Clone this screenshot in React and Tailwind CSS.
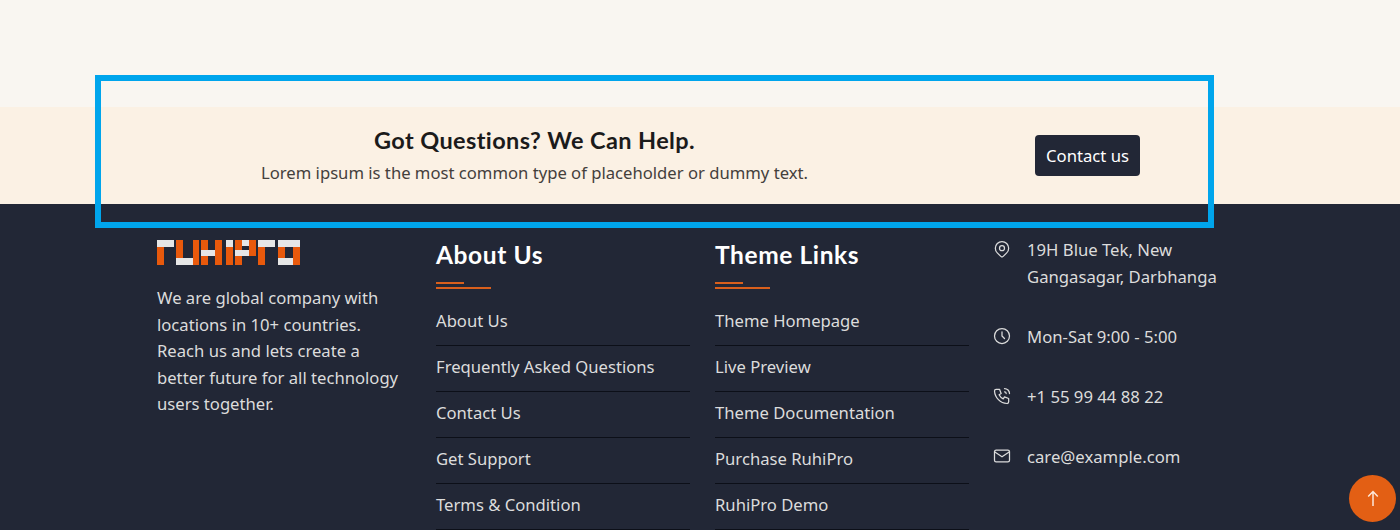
import React from "react";
import { TbMapPin, TbClock, TbPhoneCall, TbMail } from "react-icons/tb";

const O = "#e8590c";
const W = "#e6e6e6";

// x, y, w, h, fill - logo blocks
const logoBlocks = [
  // r
  [0, 7, 7, 18, O], [0, 0, 17, 7, W],
  // u
  [19, 0, 7, 18, O], [19, 18, 17, 7, W], [36, 0, 6, 25, O],
  // h
  [44, 0, 7, 25, O], [44, 10, 14, 6, W], [58, 0, 7, 25, O],
  // i
  [69, 0, 7, 7, W], [69, 7, 7, 18, O],
  // p
  [78, 0, 7, 25, O], [78, 10, 14, 6, W], [85, 0, 7, 6, W], [92, 0, 7, 16, O],
  // r
  [101, 7, 7, 18, O], [101, 0, 17, 7, W],
  // o
  [121, 0, 22, 7, W], [121, 7, 7, 11, O], [121, 18, 16, 7, W], [136, 7, 7, 18, O],
];

const Logo = () => (
  <svg width="144" height="25" viewBox="0 0 144 25" className="block">
    {logoBlocks.map(([x, y, w, h, fill], i) => (
      <rect key={i} x={x} y={y} width={w} height={h} fill={fill} />
    ))}
  </svg>
);

const FooterColumn = ({ title, links }) => (
  <div className="w-[254px]">
    <h4 className="pt-[1px] font-['Lato',sans-serif] text-[24.5px] font-bold leading-[28px] tracking-[0.6px] text-white">
      {title}
    </h4>
    <div className="mt-[13px] h-[7px] w-[55px]">
      <div className="h-[2px] w-[28px] bg-[#d95f1c]" />
      <div className="mt-[3px] h-[2px] w-[55px] bg-[#d95f1c]" />
    </div>
    <ul className="mt-[11px]">
      {links.map((link) => (
        <li
          key={link}
          className="h-[46px] border-b border-[#0c0f18] pt-[8px] text-[16.65px] leading-[26px] text-[#dcdcdc]"
        >
          {link}
        </li>
      ))}
    </ul>
  </div>
);

const ContactRow = ({ icon: Icon, className = "", children }) => (
  <div className={`flex gap-[15px] ${className}`}>
    <Icon size={20} strokeWidth={1.5} className="mt-[3px] shrink-0 text-[#dcdcdc]" />
    <p className="text-[16.7px] leading-[27px] text-[#dcdcdc]">{children}</p>
  </div>
);

const App = () => {
  return (
    <div className="relative h-[530px] w-[1400px] overflow-hidden bg-[#222736] font-['Noto_Sans',sans-serif]">
      <div className="h-[107px] bg-[#f9f6f1]" />

      <section className="flex h-[97px] bg-[#fbf1e4]">
        <div className="ml-[261px] w-[547px] pt-[17px] text-center">
          <h3 className="font-['Lato',sans-serif] text-[23.5px] font-bold leading-[32px] tracking-[0.4px] text-[#1b1b1b]">
            Got Questions? We Can Help.
          </h3>
          <p className="mt-[3px] whitespace-nowrap text-[16.65px] leading-[28px] text-[#44403c]">
            Lorem ipsum is the most common type of placeholder or dummy text.
          </p>
        </div>
        <button className="ml-[227px] mt-[28px] h-[41px] w-[105px] rounded-[4px] bg-[#222736] text-[16.7px] text-white">
          Contact us
        </button>
      </section>

      <footer className="flex pl-[157px] pt-[36px]">
        <div className="w-[279px]">
          <Logo />
          <p className="mt-[20px] w-[250px] text-[16.65px] leading-[26.6px] text-[#dcdcdc]">
            We are global company with locations in 10+ countries. Reach us and lets create a better future for all technology users together.
          </p>
        </div>
        <div className="w-[279px]">
          <FooterColumn
            title="About Us"
            links={["About Us", "Frequently Asked Questions", "Contact Us", "Get Support", "Terms & Condition"]}
          />
        </div>
        <div className="w-[280px]">
          <FooterColumn
            title="Theme Links"
            links={["Theme Homepage", "Live Preview", "Theme Documentation", "Purchase RuhiPro", "RuhiPro Demo"]}
          />
        </div>
        <div className="-ml-[3px] -mt-[4px]">
          <ContactRow icon={TbMapPin}>
            19H Blue Tek, New
            <br />
            Gangasagar, Darbhanga
          </ContactRow>
          <ContactRow icon={TbClock} className="mt-[33px]">Mon-Sat 9:00 - 5:00</ContactRow>
          <ContactRow icon={TbPhoneCall} className="mt-[33px]">+1 55 99 44 88 22</ContactRow>
          <ContactRow icon={TbMail} className="mt-[33px]">care@example.com</ContactRow>
        </div>
      </footer>

      {/* blue highlight frame over the band */}
      <div className="absolute left-[95px] top-[75px] h-[153px] w-[1119px] border-[6px] border-[#00a5ec]" />

      <button className="absolute left-[1349px] top-[475px] flex h-[47px] w-[47px] items-center justify-center rounded-full bg-[#e35f14]">
        <svg width="12" height="17" viewBox="0 0 12 17" fill="none" stroke="#fde8da" strokeWidth="1.5">
          <path d="M6 16V1.5M1.2 6.5L6 1.5l4.8 5" />
        </svg>
      </button>
    </div>
  );
};

export default App;
